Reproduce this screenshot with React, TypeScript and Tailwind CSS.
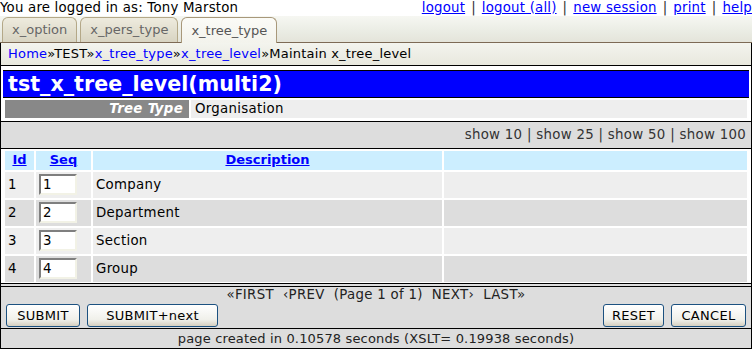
import React from "react"

const tabs = [
  { label: "x_option", active: false },
  { label: "x_pers_type", active: false },
  { label: "x_tree_type", active: true },
]

const rows = [
  { id: 1, seq: "1", desc: "Company" },
  { id: 2, seq: "2", desc: "Department" },
  { id: 3, seq: "3", desc: "Section" },
  { id: 4, seq: "4", desc: "Group" },
]

const Sep = () => <span className="px-[6px] text-[#333]">|</span>

const Button = ({ label, w }: { label: string; w: string }) => (
  <button
    className={`${w} h-[23px] rounded-[3px] border border-[#1c5180] bg-[linear-gradient(#ffffff,#f0f0ea_70%,#d6d0c0)] text-[13px] leading-none tracking-[0.3px] text-black`}
  >
    {label}
  </button>
)

export default function App() {
  return (
    <div className="w-[752px] h-[349px] overflow-hidden bg-white font-['DejaVu_Sans',Verdana,sans-serif] text-[13.33px] tracking-[0.3px] text-black">
      {/* user line */}
      <div className="flex h-[16px] items-start justify-between leading-[15px] tracking-[0.2px]">
        <span>You are logged in as: Tony Marston</span>
        <span className="whitespace-nowrap">
          <a className="text-[#0000ff] underline">logout</a>
          <Sep />
          <a className="text-[#0000ff] underline">logout (all)</a>
          <Sep />
          <a className="text-[#0000ff] underline">new session</a>
          <Sep />
          <a className="text-[#0000ff] underline">print</a>
          <Sep />
          <a className="text-[#0000ff] underline">help</a>
        </span>
      </div>

      {/* tab bar */}
      <div className="flex h-[27px] items-end gap-[3px] border-b border-[#7d6a55] bg-[linear-gradient(#f6f7f2,#eceee6_50%,#e4e4da)] pl-[2px] text-[13px] tracking-normal">
        {tabs.map((t) =>
          t.active ? (
            <div
              key={t.label}
              className="-mb-px flex h-[26px] items-center rounded-t-[6px] border border-b-0 border-[#a8987a] bg-[linear-gradient(#fbfbf7,#f3f3ec)] px-[9px] text-[#555]"
            >
              {t.label}
            </div>
          ) : (
            <div
              key={t.label}
              className="flex h-[25px] items-center rounded-t-[6px] border border-b-0 border-[#b4a888] bg-[linear-gradient(#eeebde,#d8d4c2)] px-[9px] text-[#666]"
            >
              {t.label}
            </div>
          )
        )}
      </div>

      {/* breadcrumb */}
      <div className="flex h-[22px] items-center border-x border-black bg-[linear-gradient(#f3f4ee,#e8e8de)] pl-[7px] text-[13px] tracking-[0.2px]">
        <a className="text-[#0000ff]">Home</a>
        <span>»TEST»</span>
        <a className="text-[#0000ff]">x_tree_type</a>
        <span>»</span>
        <a className="text-[#0000ff]">x_tree_level</a>
        <span>»Maintain x_tree_level</span>
      </div>

      {/* main box */}
      <div className="flex h-[284px] flex-col border border-black">
        <div className="mx-[2px] mt-[4px] flex h-[28px] items-center border-y border-black bg-[#0000ff] pl-[5px] text-[20.6px] font-bold tracking-[0.05px] text-white">
          tst_x_tree_level(multi2)
        </div>

        <div className="mx-[4px] mt-[2px] flex h-[18px] gap-[2px]">
          <div className="flex w-[184px] items-center justify-end bg-[#888888] pr-[6px] font-bold italic text-white">
            Tree Type
          </div>
          <div className="flex flex-1 items-center bg-[#eeeeee] pl-[4px]">Organisation</div>
        </div>

        <div className="mt-[3px] flex h-[30px] items-center justify-end border-y border-black bg-[#dddddd] pr-[5px] text-[#333]">
          show 10 | show 25 | show 50 | show 100
        </div>

        <div className="flex flex-col gap-[2px] px-[4px] pt-[2px] pb-[1px]">
          <div className="flex h-[19px] gap-[2px] bg-white text-[13px] font-bold tracking-normal">
            <div className="flex w-[29px] items-center justify-center bg-[#cceeff]">
              <a className="text-[#0000ff] underline">Id</a>
            </div>
            <div className="flex w-[55px] items-center justify-center bg-[#cceeff]">
              <a className="text-[#0000ff] underline">Seq</a>
            </div>
            <div className="flex w-[349px] items-center justify-center bg-[#cceeff]">
              <a className="text-[#0000ff] underline">Description</a>
            </div>
            <div className="flex-1 bg-[#cceeff]" />
          </div>
          {rows.map((r, i) => {
            const bg = i % 2 === 0 ? "bg-[#eeeeee]" : "bg-[#dddddd]"
            return (
              <div key={r.id} className="flex h-[26px] gap-[2px]">
                <div className={`flex w-[29px] items-center pl-[3px] ${bg}`}>{r.id}</div>
                <div className={`flex w-[55px] items-center pl-[3px] ${bg}`}>
                  <input
                    readOnly
                    value={r.seq}
                    className="h-[21px] w-[38px] border-2 border-t-[#7f7f7f] border-l-[#7f7f7f] border-b-[#f2f2e6] border-r-[#f2f2e6] bg-white pl-[2px] text-[13.33px] text-black outline-none font-['DejaVu_Sans',Verdana,sans-serif]"
                  />
                </div>
                <div className={`flex w-[349px] items-center pl-[3px] ${bg}`}>{r.desc}</div>
                <div className={`flex-1 ${bg}`} />
              </div>
            )
          })}
        </div>

        <div className="h-[3px] border-t border-black bg-[#dddddd]" />
        <div className="flex flex-1 flex-col border-t border-black bg-[#dddddd]">
          <div className="flex h-[16px] items-center justify-center whitespace-pre text-[#222]">
            {"«FIRST  ‹PREV  (Page 1 of 1)  NEXT›  LAST»"}
          </div>
          <div className="flex h-[25px] items-center gap-[7px] px-[5px]">
            <Button label="SUBMIT" w="w-[74px]" />
            <Button label="SUBMIT+next" w="w-[131px]" />
            <div className="flex-1" />
            <Button label="RESET" w="w-[61px]" />
            <Button label="CANCEL" w="w-[75px]" />
          </div>
          <div className="flex flex-1 items-center justify-center border-t border-black text-[13px] tracking-[0.15px] text-[#222]">
            page created in 0.10578 seconds (XSLT= 0.19938 seconds)
          </div>
        </div>
      </div>
    </div>
  )
}
